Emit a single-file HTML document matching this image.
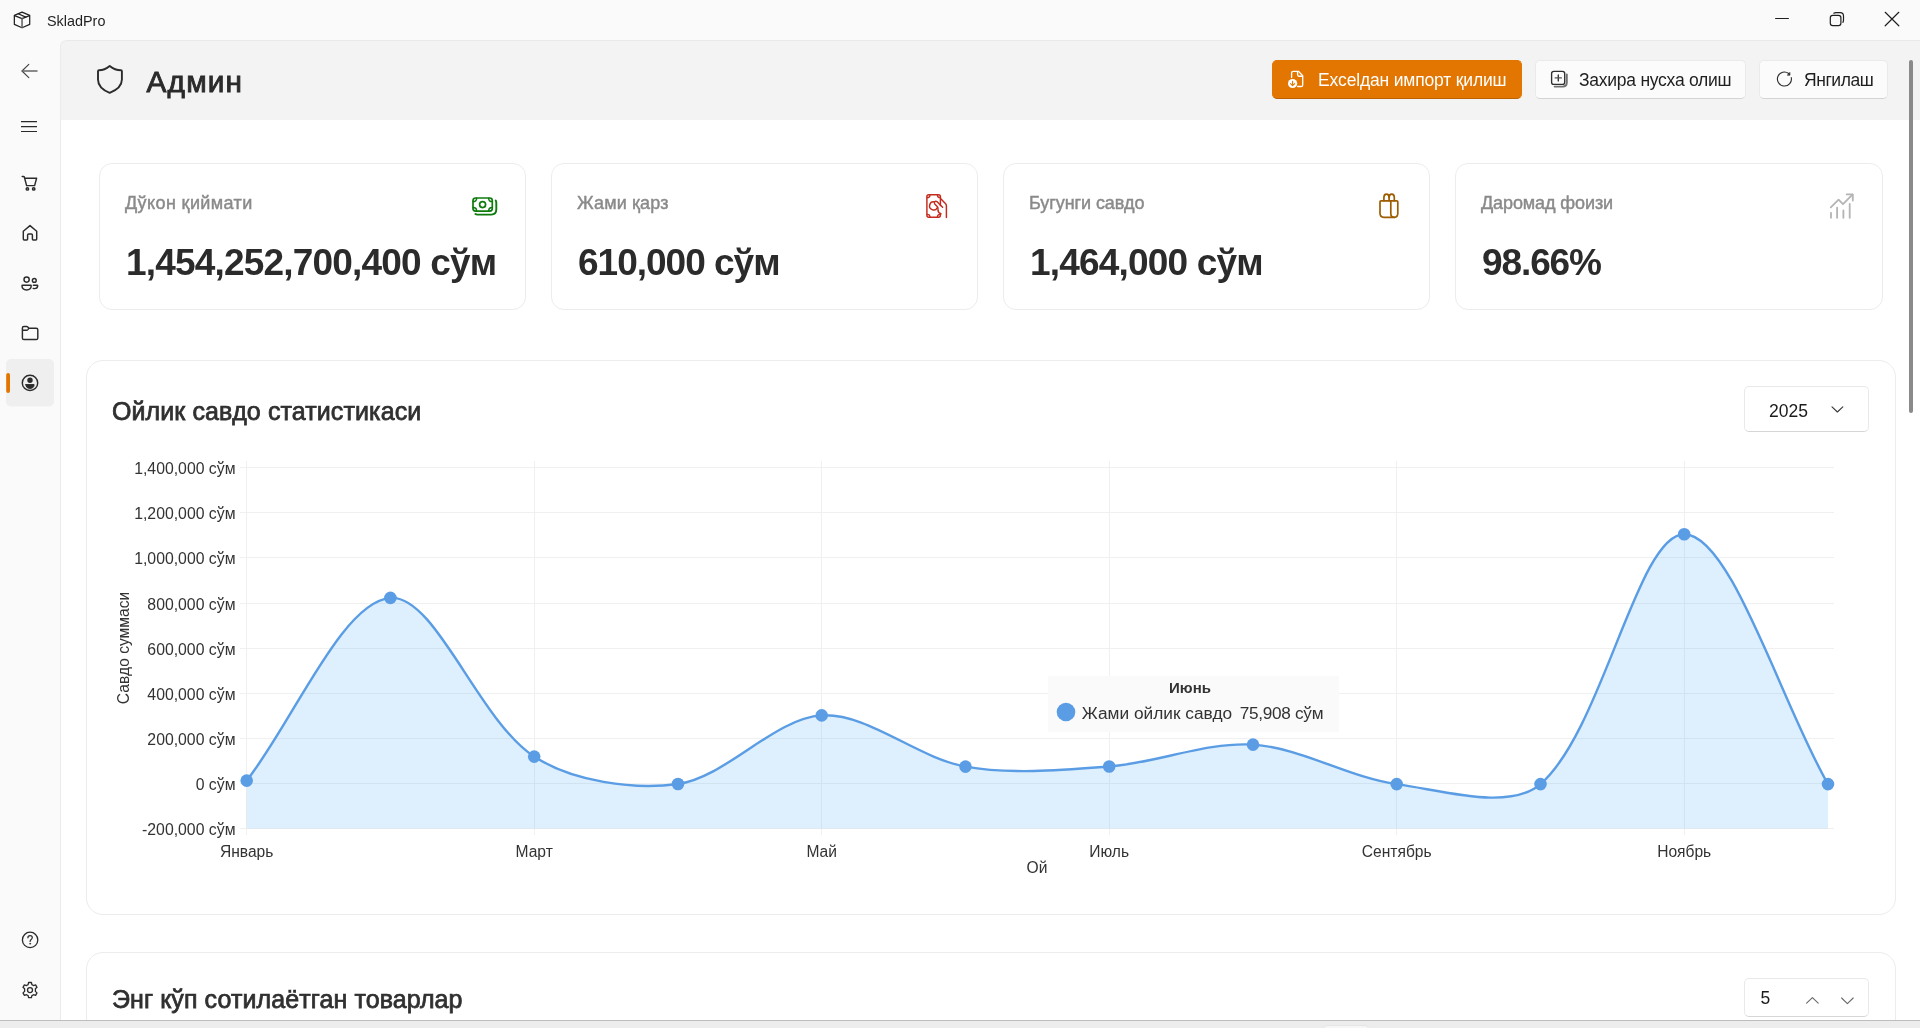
<!DOCTYPE html>
<html lang="uz">
<head>
<meta charset="utf-8">
<title>SkladPro</title>
<style>
*{box-sizing:border-box;margin:0;padding:0}
html,body{width:1920px;height:1028px;overflow:hidden;background:#fafafa;font-family:"Liberation Sans",sans-serif;color:#1b1b1b}
.abs{position:absolute}
#app{position:relative;width:1920px;height:1028px;overflow:hidden;background:#fafafa;will-change:transform}
#titlebar{left:0;top:0;width:1920px;height:40px}
#apptitle{left:47px;top:13px;font-size:14.4px;line-height:16px;color:#1f1f1f;white-space:nowrap}
#content{left:61px;top:40px;width:1859px;height:988px;background:#fff;border-top-left-radius:6px;overflow:hidden;box-shadow:-1px 0 0 0 #ebebeb}
#header{left:0;top:0;width:1859px;height:80px;background:#f3f3f3;border-top-left-radius:6px;box-shadow:inset 0 1px 0 #e9e9e9}
#pagetitle{left:85.6px;top:25px;font-size:29.8px;line-height:34px;font-weight:400;color:#2b2b2b;white-space:nowrap;letter-spacing:1.15px;-webkit-text-stroke:.9px #2b2b2b}
.btn{height:39px;top:20px;border-radius:5px;font-size:17.5px;line-height:38.6px;white-space:nowrap;background:#fbfbfb;border:1px solid #eaeaea;border-bottom-color:#d3d3d3;color:#1f1f1f}
.btn span{position:absolute;top:0}
.btn.accent{background:#e27600;border:1px solid #e27600;border-bottom-color:#bd6200;color:#fff}
.card{background:#fff;border:1px solid #ececec;border-radius:13px}
.kpi .lbl{left:25px;top:28px;font-size:18px;line-height:22px;color:#8a8a8a;white-space:nowrap;letter-spacing:0;-webkit-text-stroke:.45px #8a8a8a}
.kpi .val{left:26px;top:77.5px;font-size:37px;line-height:42px;font-weight:700;color:#2b2b2b;white-space:nowrap;letter-spacing:-.82px}
.h2{font-size:25px;line-height:30px;font-weight:400;color:#303030;white-space:nowrap;letter-spacing:.1px;-webkit-text-stroke:.75px #303030}
.box{background:#fff;border:1px solid #e9e9e9;border-bottom-color:#d6d6d6;border-radius:5px}
svg{position:absolute;overflow:visible}
svg text{font-family:"Liberation Sans",sans-serif}
</style>
</head>
<body>
<div id="app">
  <!-- title bar -->
  <div id="titlebar" class="abs">
    <div id="apptitle" class="abs">SkladPro</div>
  </div>
  <!-- sidebar -->
  <div id="sidebar" class="abs" style="left:0;top:40px;width:60px;height:988px"></div>
  <!-- content -->
  <div id="content" class="abs">
    <div id="header" class="abs">
      <div id="pagetitle" class="abs">Админ</div>
      <div class="btn accent abs" style="left:1211px;width:250px"><span style="left:45px;letter-spacing:-.17px">Excelдан импорт қилиш</span></div>
      <div class="btn abs" style="left:1474px;width:211px"><span style="left:43px;letter-spacing:-.25px">Захира нусха олиш</span></div>
      <div class="btn abs" style="left:1698px;width:129px"><span style="left:44px;letter-spacing:-.45px">Янгилаш</span></div>
    </div>
    <!-- KPI cards -->
    <div class="card kpi abs" style="left:38px;top:123px;width:427px;height:147px"><div class="lbl abs" style="letter-spacing:.4px">Дўкон қиймати</div><div class="val abs">1,454,252,700,400 сўм</div></div>
    <div class="card kpi abs" style="left:490px;top:123px;width:427px;height:147px"><div class="lbl abs" style="letter-spacing:.15px">Жами қарз</div><div class="val abs" style="letter-spacing:-1px">610,000 сўм</div></div>
    <div class="card kpi abs" style="left:942px;top:123px;width:427px;height:147px"><div class="lbl abs" style="letter-spacing:-.08px">Бугунги савдо</div><div class="val abs">1,464,000 сўм</div></div>
    <div class="card kpi abs" style="left:1394px;top:123px;width:428px;height:147px"><div class="lbl abs" style="letter-spacing:-.1px">Даромад фоизи</div><div class="val abs" style="letter-spacing:-1.1px">98.66%</div></div>
    <!-- chart card -->
    <div class="card abs" style="left:25px;top:320px;width:1810px;height:555px;border-radius:17px">
      <div class="h2 abs" style="left:25px;top:35px">Ойлик савдо статистикаси</div>
      <div class="box abs" style="left:1657px;top:25px;width:125px;height:46px"><div class="abs" style="left:24px;top:14px;font-size:17.5px;line-height:20px">2025</div></div>
    </div>
    <!-- second card -->
    <div class="card abs" style="left:25px;top:912px;width:1810px;height:200px;border-radius:17px">
      <div class="h2 abs" style="left:25px;top:31px">Энг кўп сотилаётган товарлар</div>
      <div class="box abs" style="left:1657px;top:25px;width:125px;height:39px"><div class="abs" style="left:15.5px;top:9px;font-size:17.5px;line-height:20px">5</div></div>
    </div>
    <!-- scrollbar -->
    <div class="abs" style="left:1848px;top:20px;width:4px;height:353px;border-radius:2px;background:#8a8a8a"></div>
  </div>
  <!-- chart svg (page coordinates) -->
  <svg id="chart" width="1920" height="1028" style="left:0;top:0" viewBox="0 0 1920 1028">
    <g stroke="#f0f0f0" stroke-width="1" shape-rendering="crispEdges">
    <line x1="240" x2="1834" y1="467.5" y2="467.5"/>
    <line x1="240" x2="1834" y1="512.5" y2="512.5"/>
    <line x1="240" x2="1834" y1="557.5" y2="557.5"/>
    <line x1="240" x2="1834" y1="603.5" y2="603.5"/>
    <line x1="240" x2="1834" y1="648.5" y2="648.5"/>
    <line x1="240" x2="1834" y1="693.5" y2="693.5"/>
    <line x1="240" x2="1834" y1="738.5" y2="738.5"/>
    <line x1="240" x2="1834" y1="783.5" y2="783.5"/>
    <line x1="240" x2="1834" y1="828.5" y2="828.5"/>
    <line x1="246.5" x2="246.5" y1="461" y2="835"/>
    <line x1="534.5" x2="534.5" y1="461" y2="835"/>
    <line x1="821.5" x2="821.5" y1="461" y2="835"/>
    <line x1="1109.5" x2="1109.5" y1="461" y2="835"/>
    <line x1="1396.5" x2="1396.5" y1="461" y2="835"/>
    <line x1="1684.5" x2="1684.5" y1="461" y2="835"/>
    </g>
    <path d="M246.7 780.6C293.4 721.2 341.8 602.0 390.4 597.9C435.2 594.2 478.7 720.7 534.2 756.6C572.1 781.2 633.2 790.4 678.0 784.0C726.6 777.0 774.0 718.3 821.7 715.4C867.4 712.6 917.3 758.0 965.5 766.6C1010.8 774.7 1062.7 770.1 1109.2 766.5C1156.2 762.9 1206.8 741.8 1253.0 744.6C1300.3 747.5 1349.1 777.6 1396.7 784.1C1442.6 790.4 1509.4 811.1 1540.5 784.1C1602.8 729.9 1637.5 534.2 1684.2 534.2C1730.9 534.2 1781.2 702.9 1828.0 784.1L1828.0 828.6L246.7 828.6Z" fill="#2a96f0" fill-opacity="0.155"/>
    <path d="M246.7 780.6C293.4 721.2 341.8 602.0 390.4 597.9C435.2 594.2 478.7 720.7 534.2 756.6C572.1 781.2 633.2 790.4 678.0 784.0C726.6 777.0 774.0 718.3 821.7 715.4C867.4 712.6 917.3 758.0 965.5 766.6C1010.8 774.7 1062.7 770.1 1109.2 766.5C1156.2 762.9 1206.8 741.8 1253.0 744.6C1300.3 747.5 1349.1 777.6 1396.7 784.1C1442.6 790.4 1509.4 811.1 1540.5 784.1C1602.8 729.9 1637.5 534.2 1684.2 534.2C1730.9 534.2 1781.2 702.9 1828.0 784.1" fill="none" stroke="#5a9de4" stroke-width="2.4" stroke-linejoin="round"/>
    <g fill="#5a9de4"><circle cx="246.7" cy="780.6" r="6.3"/><circle cx="390.4" cy="597.9" r="6.3"/><circle cx="534.2" cy="756.6" r="6.3"/><circle cx="678.0" cy="784.0" r="6.3"/><circle cx="821.7" cy="715.4" r="6.3"/><circle cx="965.5" cy="766.6" r="6.3"/><circle cx="1109.2" cy="766.5" r="6.3"/><circle cx="1253.0" cy="744.6" r="6.3"/><circle cx="1396.7" cy="784.1" r="6.3"/><circle cx="1540.5" cy="784.1" r="6.3"/><circle cx="1684.2" cy="534.2" r="6.3"/><circle cx="1828.0" cy="784.1" r="6.3"/></g>
    <g font-size="15.8" fill="#333" text-anchor="end">
    <text x="235.5" y="474.2">1,400,000 сўм</text>
    <text x="235.5" y="519.3">1,200,000 сўм</text>
    <text x="235.5" y="564.4">1,000,000 сўм</text>
    <text x="235.5" y="609.5">800,000 сўм</text>
    <text x="235.5" y="654.6">600,000 сўм</text>
    <text x="235.5" y="699.7">400,000 сўм</text>
    <text x="235.5" y="744.8">200,000 сўм</text>
    <text x="235.5" y="789.9">0 сўм</text>
    <text x="235.5" y="835.0">-200,000 сўм</text>
    </g>
    <g font-size="15.6" fill="#333" text-anchor="middle">
    <text x="246.7" y="857">Январь</text>
    <text x="534.2" y="857">Март</text>
    <text x="821.7" y="857">Май</text>
    <text x="1109.2" y="857">Июль</text>
    <text x="1396.7" y="857">Сентябрь</text>
    <text x="1684.2" y="857">Ноябрь</text>
    <text x="1037" y="873">Ой</text>
    <text transform="translate(128.5 648) rotate(-90)">Савдо суммаси</text>
    </g>
    <rect x="1048" y="676" width="291" height="56" fill="#fafafa" fill-opacity="0.97"/>
    <text x="1190" y="693" font-size="15" font-weight="700" fill="#333" text-anchor="middle">Июнь</text>
    <circle cx="1066" cy="712" r="9.3" fill="#5a9de4"/>
    <text x="1081.8" y="719" font-size="17.3" fill="#333">Жами ойлик савдо</text>
    <text x="1323.2" y="719" font-size="17.2" fill="#333" text-anchor="end" letter-spacing="-0.3">75,908 сўм</text>
  </svg>
  <svg id="icons" width="1920" height="1028" style="left:0;top:0" viewBox="0 0 1920 1028" fill="none" stroke-linecap="round" stroke-linejoin="round">
    <!-- app icon: box -->
    <g stroke="#222" stroke-width="1.25">
      <path d="M22.05 12.1L29.7 15.4V24.4L22.05 27.7L14.35 24.4V15.4Z"/>
      <path d="M14.6 15.6L22.05 18.7L29.5 15.6"/>
      <path d="M18.2 13.8L25.8 17.1"/>
      <path d="M22.05 18.7V27.5" stroke="#666" stroke-width="1.6"/>
    </g>
    <!-- window controls -->
    <g stroke="#1f1f1f" stroke-width="1.2">
      <path d="M1775.6 18.5H1788.4"/>
      <rect x="1830.3" y="15.3" width="10.6" height="10.4" rx="2.4"/>
      <path d="M1833.8 13.2Q1834.7 12.6 1836 12.6H1840.2Q1843.5 12.6 1843.5 15.9V20Q1843.5 21.4 1842.9 22.3"/>
      <path d="M1885.2 12.3L1898.8 25.8M1898.8 12.3L1885.2 25.8"/>
    </g>
    <!-- nav: back + hamburger -->
    <g stroke="#444" stroke-width="1.15">
      <path d="M28.8 64.3L22 71L28.8 77.7"/>
      <path d="M22.4 71H37" stroke="#666" stroke-width="1.5"/>
    </g>
    <g stroke="#2a2a2a" stroke-width="1.2" stroke-linecap="butt">
      <path d="M21 121.6H37M21 126.6H37M21 131.5H37"/>
    </g>
    <!-- sidebar icons -->
    <g stroke="#2b2b2b" stroke-width="1.45">
      <!-- cart -->
      <path d="M22.2 176.4H23.4Q24.2 176.4 24.4 177.2L26.6 185.6H34.6L36.6 178.3H24.8"/>
      <circle cx="27.4" cy="188.9" r="1.2"/><circle cx="33.7" cy="188.9" r="1.2"/>
      <!-- home -->
      <path d="M30 225.6L36.7 231.2V239Q36.7 239.9 35.8 239.9H33.2Q32.4 239.9 32.4 239V235Q32.4 234 31.4 234H28.6Q27.6 234 27.6 235V239Q27.6 239.9 26.8 239.9H24.2Q23.3 239.9 23.3 239V231.2Z"/>
      <!-- people -->
      <circle cx="26.6" cy="279.6" r="2.6"/>
      <circle cx="34.3" cy="280.4" r="1.9"/>
      <path d="M22.4 285.2H30.8Q31.2 285.2 31.2 285.8Q31.2 289.9 26.6 289.9Q22 289.9 22 285.8Q22 285.2 22.4 285.2Z"/>
      <path d="M33.4 285.2H37.2Q37.7 285.2 37.7 285.8Q37.6 288.6 34.6 288.6Q33.8 288.6 33.2 288.4"/>
      <!-- folder -->
      <path d="M22.4 330.2V328Q22.4 326.5 23.9 326.5H26.6Q27.3 326.5 27.8 327L28.9 328.2H36.2Q37.8 328.2 37.8 329.8V337.9Q37.8 339.5 36.2 339.5H23.9Q22.4 339.5 22.4 337.9V330.2H26.6Q27.4 330.2 27.9 329.6L28.9 328.2"/>
    </g>
    <!-- selected item -->
    <rect x="6" y="359" width="48" height="47.5" rx="5" fill="#efefef" stroke="none"/>
    <rect x="6.2" y="373" width="3.8" height="20" rx="1.9" fill="#e27600" stroke="none"/>
    <g stroke="#2b2b2b" stroke-width="1.45">
      <circle cx="30" cy="382.9" r="7.7"/>
      <circle cx="30" cy="380.2" r="2" fill="#2b2b2b"/>
      <path d="M25.9 384.6H34.1Q34.1 388.4 30 388.4Q25.9 388.4 25.9 384.6Z" fill="#2b2b2b" stroke-width="1"/>
    </g>
    <!-- help + settings -->
    <g stroke="#2b2b2b" stroke-width="1.3">
      <circle cx="30.1" cy="939.9" r="7.7"/>
      <path d="M27.9 937.8Q27.9 935.6 30.1 935.6Q32.3 935.6 32.3 937.6Q32.3 938.8 31.2 939.5Q30.1 940.2 30.1 941.5" stroke-width="1.2"/>
      <circle cx="30.1" cy="943.7" r=".55" fill="#2b2b2b" stroke-width=".6"/>
      <circle cx="30" cy="990.1" r="2.5"/>
      <path d="M28.6 982.5H31.4L31.9 984.6L33.5 985.5L35.6 984.9L37 987.3L35.4 988.8V991.4L37 992.9L35.6 995.3L33.5 994.7L31.9 995.6L31.4 997.7H28.6L28.1 995.6L26.5 994.7L24.4 995.3L23 992.9L24.6 991.4V988.8L23 987.3L24.4 984.9L26.5 985.5L28.1 984.6Z"/>
    </g>
    <!-- KPI: money (green) -->
    <g stroke="#0f7b0f" stroke-width="1.7">
      <rect x="473" y="198" width="19.3" height="13.1" rx="2.6"/>
      <circle cx="482.6" cy="204.6" r="3"/>
      <path d="M473.2 201.6Q476.6 201.6 476.6 198.2M492.1 201.6Q488.7 201.6 488.7 198.2M473.2 207.5Q476.6 207.5 476.6 210.9M492.1 207.5Q488.7 207.5 488.7 210.9" stroke-width="1.5"/>
      <path d="M495.7 200.6Q496.3 201.6 496.3 203V209.6Q496.3 214.6 491.3 214.6H477.4Q476.2 214.6 475.4 214" stroke-width="1.9"/>
    </g>
    <!-- KPI: money hand (red) -->
    <g stroke="#c42b1c" stroke-width="1.45">
      <path d="M940.4 205.4V196.6Q940.4 194.7 938.5 194.7H928.8Q926.9 194.7 926.9 196.6V215.3Q926.9 217.2 928.8 217.2H938.5Q940.4 217.2 940.4 215.3V213.6"/>
      <path d="M927.1 197.7Q930 197.7 930 194.9M940.2 197.7Q937.4 197.7 937.4 194.9M927.1 214.3Q930 214.3 930 217M940.2 214.3Q937.4 214.3 937.4 217" stroke-width="1.3"/>
      <path d="M934.4 201.9A4.05 4.05 0 1 0 937.2 207.8"/>
      <path d="M940.8 198.7L945.6 203.8Q946.4 204.7 946.4 205.9V217.5"/>
      <path d="M942.6 207.3L936.9 201.6Q935.8 200.7 934.7 201.7Q933.8 202.8 934.8 204L937.4 206.8Q938 207.5 938 208.5V210.4Q938.2 212.9 940.9 213.7"/>
    </g>
    <!-- KPI: shopping bag (amber) -->
    <g stroke="#9d5d00" stroke-width="1.7">
      <path d="M1383.9 200.7V197.6Q1383.9 194.1 1386.5 194.1Q1389.1 194.1 1389.1 197.6V200.7"/>
      <path d="M1389.1 197.6Q1389.1 194.1 1391.7 194.1Q1394.3 194.1 1394.3 197.6V200.7"/>
      <path d="M1380 201.8Q1380 200.8 1381 200.8H1396.8Q1397.8 200.8 1397.8 201.8V213.3Q1397.8 217.3 1394.3 217.3H1384Q1380 217.3 1380 213.3Z"/>
      <path d="M1390.8 200.8V213.5Q1390.8 217.3 1394.3 217.3"/>
    </g>
    <!-- KPI: trending (gray) -->
    <g stroke="#b4b4b4" stroke-width="1.8">
      <path d="M1831 212.8V217.8M1837.1 207.6V217.8M1843.4 210.4V217.8M1849.7 203.8V217.8"/>
      <path d="M1830.8 207.3L1838.6 199.7L1843 204.2L1852.4 194.7"/>
      <path d="M1846.7 194.4H1852.8V200.5"/>
    </g>
    <!-- button: document arrow down (white) -->
    <g stroke="#fff" stroke-width="1.35">
      <path d="M1291.6 77.4V73Q1291.6 71.4 1293.2 71.4H1298.6L1302.7 75.8V84.9Q1302.7 86.5 1301.1 86.5H1297.6"/>
      <path d="M1297.6 71.6V74.8Q1297.6 76.2 1299 76.2H1302.4"/>
      <circle cx="1292.6" cy="83.5" r="4.6" fill="#fff" stroke="none"/>
      <path d="M1292.6 81.2V85.6M1290.5 83.6L1292.6 85.7L1294.7 83.6" stroke="#e27600" stroke-width="1.1"/>
    </g>
    <!-- button: backup (square plus) -->
    <g stroke="#2f2f2f" stroke-width="1.35">
      <rect x="1551.6" y="71.4" width="13.1" height="13" rx="2.2"/>
      <path d="M1558.3 75V80.9" />
      <path d="M1555.2 77.9H1561.4" stroke="#555"/>
      <path d="M1566.8 74.4V82.6Q1566.8 86.6 1562.8 86.6H1554.6" stroke="#707070" stroke-width="1.9"/>
    </g>
    <!-- button: refresh -->
    <g stroke="#2b2b2b" stroke-width="1.12">
      <path d="M1791.25 77.5A7 7 0 1 1 1788.7 73.5"/>
      <path d="M1790 72.7V75.2H1787.5Z" fill="#2b2b2b" stroke-width=".6"/>
    </g>
    <!-- chevrons -->
    <g stroke="#3a3a3a" stroke-width="1.15">
      <path d="M1832 406.8L1837.4 412L1842.8 406.8"/>
    </g>
    <g stroke="#6a6a6a" stroke-width="1.15">
      <path d="M1806.6 1003.2L1812.4 997.6L1818.2 1003.2"/>
      <path d="M1841.6 998L1847.4 1003.6L1853.2 998"/>
    </g>
    <!-- shield -->
    <path d="M109.7 65.9C106.2 68.8 102.4 70.2 99 70.2Q98 70.2 98 71.2V79.5C98 85.8 102.6 90 109.7 92.9C116.8 90 121.9 85.8 121.9 79.5V71.2Q121.9 70.2 120.9 70.2C117 70.2 113.2 68.8 109.7 65.9Z" stroke="#2b2b2b" stroke-width="1.9"/>
  </svg>
  <!-- bottom strip -->
  <div class="abs" style="left:0;top:1020px;width:1920px;height:8px;background:#ededed;border-top:1px solid #bdbdbd;overflow:hidden"><div class="abs" style="left:1323px;top:4px;width:46px;height:10px;border-radius:4px;background:#f6f6f6;border:1px solid #e6e6e6"></div></div>
</div>
</body>
</html>
